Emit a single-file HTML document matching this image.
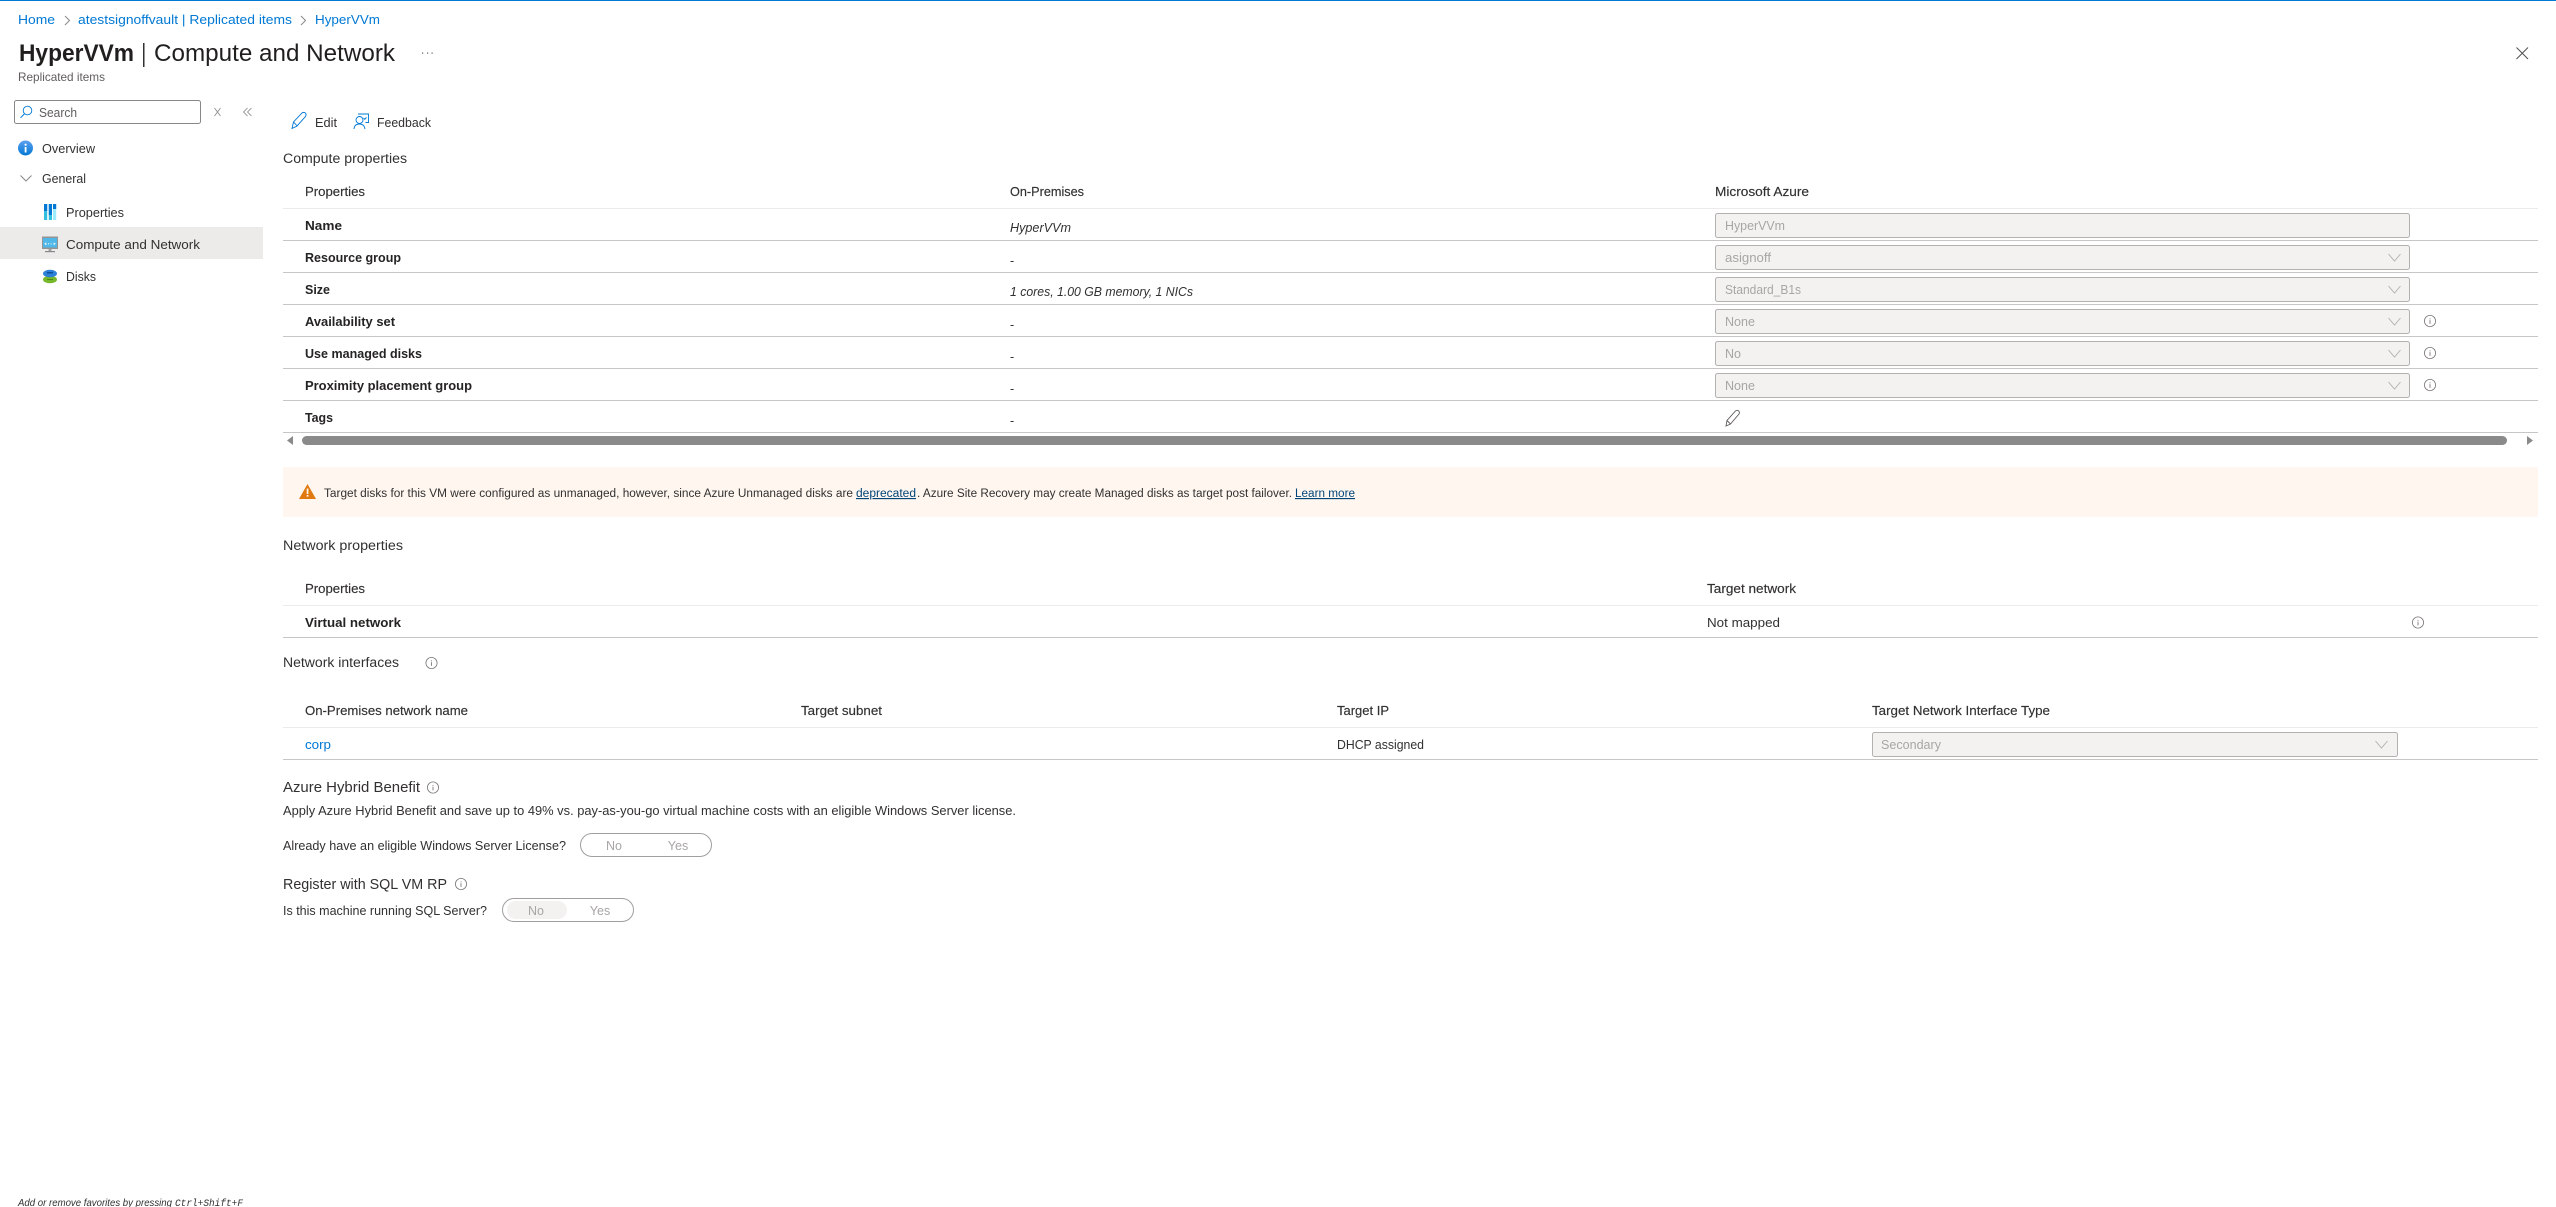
<!DOCTYPE html>
<html lang="en"><head><meta charset="utf-8"><title>HyperVVm | Compute and Network</title>
<style>
html,body{margin:0;padding:0;background:#fff;width:2556px;height:1207px;overflow:hidden}
svg{display:block}
text{font-family:"Liberation Sans",sans-serif;font-size:12.5px;fill:#323130;white-space:pre}
.l{fill:#0078d4}
.b{font-weight:700;fill:#252423}
.h{stroke:#323130;stroke-width:.15}
.g{fill:#a8a6a4}
.i{font-style:italic}
.ln{stroke:#c8c6c4;stroke-width:1}
.lt{stroke:#edebe9;stroke-width:1}
.in{fill:#f3f2f1;stroke:#b3b0ad;stroke-width:1}
.ch{fill:none;stroke:#b3b0ad;stroke-width:.9}
.inf{fill:none;stroke:#7a7876;stroke-width:.8}
.dk{fill:none;stroke:#8a8886;stroke-width:1}
</style></head><body>
<svg width="2556" height="1207" viewBox="0 0 2556 1207" xmlns="http://www.w3.org/2000/svg">
<defs>
<g id="info"><circle cx="0" cy="0" r="5.6" class="inf"/><rect x="-.45" y="-2.6" width=".9" height=".9" fill="#7a7876"/><rect x="-.45" y="-.8" width=".9" height="3.6" fill="#7a7876"/></g>
<linearGradient id="gb" x1="0" y1="0" x2="0" y2="1"><stop offset="0" stop-color="#5ea0ef"/><stop offset="1" stop-color="#0078d4"/></linearGradient>
</defs>
<rect x="0" y="0" width="2556" height="1" fill="#0078d4"/>

<!-- breadcrumb -->
<text x="18" y="24" class="l" textLength="37" lengthAdjust="spacingAndGlyphs">Home</text>
<path d="M65 16l4.500 4.500-4.500 4.500" class="dk"/>
<text x="78" y="24" class="l" textLength="214" lengthAdjust="spacingAndGlyphs">atestsignoffvault | Replicated items</text>
<path d="M301 16l4.500 4.500-4.500 4.500" class="dk"/>
<text x="315" y="24" class="l" textLength="65" lengthAdjust="spacingAndGlyphs">HyperVVm</text>

<!-- title -->
<text x="19" y="61" style="font-size:24px;font-weight:700;fill:#201f1e" textLength="115" lengthAdjust="spacingAndGlyphs">HyperVVm</text>
<rect x="143" y="43" width="1.500" height="24" fill="#323130"/>
<text x="154" y="61" style="font-size:24px;fill:#201f1e" textLength="241" lengthAdjust="spacingAndGlyphs">Compute and Network</text>
<text x="18" y="81" style="font-size:12px;fill:#605e5c" textLength="87" lengthAdjust="spacingAndGlyphs">Replicated items</text>
<g fill="#605e5c"><rect x="422" y="52.500" width="1.200" height="1.200"/><rect x="427" y="52.500" width="1.200" height="1.200"/><rect x="431.500" y="52.500" width="1.200" height="1.200"/></g>
<path d="M2516.500 47.500l11.500 11.500M2528 47.500l-11.500 11.500" fill="none" stroke="#505050" stroke-width="1"/>

<!-- search -->
<rect x="14.500" y="100.500" width="186" height="23" rx="2" fill="#fff" stroke="#8a8886"/>
<circle cx="27.500" cy="110.500" r="4.300" fill="none" stroke="#0078d4" stroke-width=".9"/>
<path d="M24.300 114l-3.800 3.800" fill="none" stroke="#0078d4" stroke-width="1"/>
<text x="39" y="117" style="fill:#605e5c" textLength="38" lengthAdjust="spacingAndGlyphs">Search</text>
<path d="M214.500 108l6 8M220.500 108l-6 8" fill="none" stroke="#8a8886" stroke-width=".8"/>
<path d="M247.500 108l-4 4 4 4M251.500 108l-4 4 4 4" fill="none" stroke="#a19f9d" stroke-width="1"/>

<!-- nav -->
<circle cx="25.500" cy="148" r="7.500" fill="url(#gb)"/>
<rect x="24.700" y="147" width="1.800" height="5.500" fill="#fff"/><circle cx="25.600" cy="144.700" r="1.100" fill="#fff"/>
<text x="42" y="153" textLength="53" lengthAdjust="spacingAndGlyphs">Overview</text>
<path d="M20.500 175.500l5.500 5.500 5.500-5.500" class="dk"/>
<text x="42" y="183" textLength="44" lengthAdjust="spacingAndGlyphs">General</text>
<rect x="44" y="204" width="3.200" height="16" fill="#32bedd"/><rect x="44" y="204" width="3.200" height="7" fill="#0078d4"/>
<rect x="48.800" y="204" width="3.200" height="16" fill="#32bedd"/><rect x="48.800" y="204" width="3.200" height="11" fill="#0078d4"/>
<rect x="53" y="204" width="3.200" height="16" fill="#9cebff"/><rect x="53" y="204" width="3.200" height="5" fill="#0078d4"/>
<text x="66" y="217" textLength="58" lengthAdjust="spacingAndGlyphs">Properties</text>
<rect x="0" y="227" width="263" height="32" fill="#edebe9"/>
<rect x="42" y="236.500" width="16" height="12.500" fill="#949494"/><rect x="43" y="238" width="14" height="9.500" fill="#50b8e8"/>
<rect x="48.500" y="249" width="3" height="2" fill="#a0a0a0"/><rect x="45" y="251" width="10" height="1.200" fill="#8a8a8a"/>
<path d="M46.500 242.800l-1.500 1 1.500 1M53.500 242.800l1.500 1-1.500 1" fill="none" stroke="#fff" stroke-width=".8"/><rect x="48" y="243.300" width="1" height="1" fill="#fff"/><rect x="50.500" y="243.300" width="1" height="1" fill="#fff"/>
<text x="66" y="249" textLength="134" lengthAdjust="spacingAndGlyphs">Compute and Network</text>
<ellipse cx="50" cy="279.500" rx="7" ry="3.800" fill="#76b82a"/><rect x="47" y="279" width="6" height="1" fill="#4f8a10"/>
<ellipse cx="50" cy="273.500" rx="7" ry="3.800" fill="#2f80d8"/><rect x="47" y="272" width="6" height="1.500" fill="#0a4f9a"/>
<text x="66" y="281" textLength="30" lengthAdjust="spacingAndGlyphs">Disks</text>

<!-- toolbar -->
<path d="M292 128.500l1.500-6.500 8.500-9q2-1.300 3.500.2 1.200 1.600-.2 3.500l-8.500 9.500zM293.500 122l3.300 3.500" fill="none" stroke="#0078d4" stroke-width=".9"/>
<text x="315" y="127" textLength="22" lengthAdjust="spacingAndGlyphs">Edit</text>
<circle cx="359.500" cy="120" r="3.500" fill="none" stroke="#0078d4" stroke-width=".9"/>
<path d="M354 129q.3-5 5.500-5 4.700 0 5.500 5M358 114h10.500v8.500h-3M363.500 118l1.300 1.300 1.700-2" fill="none" stroke="#0078d4" stroke-width=".9"/>
<text x="377" y="127" textLength="54" lengthAdjust="spacingAndGlyphs">Feedback</text>

<!-- compute table -->
<text x="283" y="163" style="font-size:13.5px" textLength="124" lengthAdjust="spacingAndGlyphs">Compute properties</text>
<line x1="283" x2="2538" y1="208.500" y2="208.500" class="lt"/>
<line x1="283" x2="2538" y1="240.500" y2="240.500" class="ln"/>
<line x1="283" x2="2538" y1="272.500" y2="272.500" class="ln"/>
<line x1="283" x2="2538" y1="304.500" y2="304.500" class="ln"/>
<line x1="283" x2="2538" y1="336.500" y2="336.500" class="ln"/>
<line x1="283" x2="2538" y1="368.500" y2="368.500" class="ln"/>
<line x1="283" x2="2538" y1="400.500" y2="400.500" class="ln"/>
<line x1="283" x2="2538" y1="432.500" y2="432.500" class="ln"/>
<text x="305" y="196" class="h" textLength="60" lengthAdjust="spacingAndGlyphs">Properties</text>
<text x="1010" y="196" class="h" textLength="74" lengthAdjust="spacingAndGlyphs">On-Premises</text>
<text x="1715" y="196" class="h" textLength="94" lengthAdjust="spacingAndGlyphs">Microsoft Azure</text>
<text x="305" y="230" class="b" textLength="37" lengthAdjust="spacingAndGlyphs">Name</text>
<text x="305" y="262" class="b" textLength="96" lengthAdjust="spacingAndGlyphs">Resource group</text>
<text x="305" y="294" class="b" textLength="25" lengthAdjust="spacingAndGlyphs">Size</text>
<text x="305" y="326" class="b" textLength="90" lengthAdjust="spacingAndGlyphs">Availability set</text>
<text x="305" y="358" class="b" textLength="117" lengthAdjust="spacingAndGlyphs">Use managed disks</text>
<text x="305" y="390" class="b" textLength="167" lengthAdjust="spacingAndGlyphs">Proximity placement group</text>
<text x="305" y="422" class="b" textLength="28" lengthAdjust="spacingAndGlyphs">Tags</text>
<text x="1010" y="232" class="i" textLength="61" lengthAdjust="spacingAndGlyphs">HyperVVm</text>
<text x="1010" y="265">-</text>
<text x="1010" y="296" class="i" textLength="183" lengthAdjust="spacingAndGlyphs">1 cores, 1.00 GB memory, 1 NICs</text>
<text x="1010" y="329">-</text>
<text x="1010" y="361">-</text>
<text x="1010" y="393">-</text>
<text x="1010" y="425">-</text>

<rect x="1715.500" y="213.500" width="694" height="24" rx="2" class="in"/>
<rect x="1715.500" y="245.500" width="694" height="24" rx="2" class="in"/>
<rect x="1715.500" y="277.500" width="694" height="24" rx="2" class="in"/>
<rect x="1715.500" y="309.500" width="694" height="24" rx="2" class="in"/>
<rect x="1715.500" y="341.500" width="694" height="24" rx="2" class="in"/>
<rect x="1715.500" y="373.500" width="694" height="24" rx="2" class="in"/>
<text x="1725" y="230" class="g" textLength="60" lengthAdjust="spacingAndGlyphs">HyperVVm</text>
<text x="1725" y="262" class="g" textLength="46" lengthAdjust="spacingAndGlyphs">asignoff</text>
<text x="1725" y="294" class="g" textLength="76" lengthAdjust="spacingAndGlyphs">Standard_B1s</text>
<text x="1725" y="326" class="g" textLength="30" lengthAdjust="spacingAndGlyphs">None</text>
<text x="1725" y="358" class="g" textLength="16" lengthAdjust="spacingAndGlyphs">No</text>
<text x="1725" y="390" class="g" textLength="30" lengthAdjust="spacingAndGlyphs">None</text>
<path d="M2388.500 254l6 7 6-7M2388.500 286l6 7 6-7M2388.500 318l6 7 6-7M2388.500 350l6 7 6-7M2388.500 382l6 7 6-7" class="ch"/>
<use href="#info" x="2430" y="321"/><use href="#info" x="2430" y="353"/><use href="#info" x="2430" y="385"/>
<path d="M1726 426l1-5.500 8.500-9.500q1.500-1.200 3-.2 1.600 1.400.5 3.200l-8.500 10zM1727 420.500l3.500 3.500" fill="none" stroke="#605e5c" stroke-width=".9"/>

<!-- scrollbar -->
<path d="M293 436v9l-6-4.500z" fill="#8a8a8a"/>
<rect x="302" y="436" width="2205" height="9" rx="4.500" fill="#8a8a8a"/>
<path d="M2527 436v9l6-4.500z" fill="#8a8a8a"/>

<!-- warning -->
<rect x="283" y="467" width="2255" height="50" rx="2" fill="#fff6f0"/>
<path d="M307.500 484l8.500 15h-17z" fill="#e07a10"/>
<rect x="306.700" y="488.500" width="1.700" height="5.500" fill="#fff6f0"/><rect x="306.700" y="495" width="1.700" height="1.700" fill="#fff6f0"/>
<text x="324" y="497" style="font-size:11.500px" textLength="529" lengthAdjust="spacingAndGlyphs">Target disks for this VM were configured as unmanaged, however, since Azure Unmanaged disks are</text>
<text x="856" y="497" style="font-size:11.500px;fill:#004578;text-decoration:underline" textLength="60" lengthAdjust="spacingAndGlyphs">deprecated</text>
<text x="917" y="497" style="font-size:11.500px" textLength="375" lengthAdjust="spacingAndGlyphs">. Azure Site Recovery may create Managed disks as target post failover.</text>
<text x="1295" y="497" style="font-size:11.500px;fill:#004578;text-decoration:underline" textLength="60" lengthAdjust="spacingAndGlyphs">Learn more</text>

<!-- network -->
<text x="283" y="550" style="font-size:13.500px" textLength="120" lengthAdjust="spacingAndGlyphs">Network properties</text>
<text x="305" y="593" class="h" textLength="60" lengthAdjust="spacingAndGlyphs">Properties</text>
<text x="1707" y="593" class="h" textLength="89" lengthAdjust="spacingAndGlyphs">Target network</text>
<line x1="283" x2="2538" y1="605.500" y2="605.500" class="lt"/>
<text x="305" y="627" class="b" textLength="96" lengthAdjust="spacingAndGlyphs">Virtual network</text>
<text x="1707" y="627" textLength="73" lengthAdjust="spacingAndGlyphs">Not mapped</text>
<use href="#info" x="2418" y="622.500"/>
<line x1="283" x2="2538" y1="637.500" y2="637.500" class="ln"/>
<text x="283" y="667" style="font-size:13.500px" textLength="116" lengthAdjust="spacingAndGlyphs">Network interfaces</text>
<use href="#info" x="431.500" y="663"/>
<text x="305" y="715" class="h" textLength="163" lengthAdjust="spacingAndGlyphs">On-Premises network name</text>
<text x="801" y="715" class="h" textLength="81" lengthAdjust="spacingAndGlyphs">Target subnet</text>
<text x="1337" y="715" class="h" textLength="52" lengthAdjust="spacingAndGlyphs">Target IP</text>
<text x="1872" y="715" class="h" textLength="178" lengthAdjust="spacingAndGlyphs">Target Network Interface Type</text>
<line x1="283" x2="2538" y1="727.500" y2="727.500" class="lt"/>
<text x="305" y="749" class="l" textLength="26" lengthAdjust="spacingAndGlyphs">corp</text>
<text x="1337" y="749" textLength="87" lengthAdjust="spacingAndGlyphs">DHCP assigned</text>
<rect x="1872.500" y="732.500" width="525" height="24" rx="2" class="in"/>
<text x="1881" y="749" class="g" textLength="60" lengthAdjust="spacingAndGlyphs">Secondary</text>
<path d="M2375.500 741l6 7 6-7" class="ch"/>
<line x1="283" x2="2538" y1="759.500" y2="759.500" class="ln"/>

<!-- hybrid benefit -->
<text x="283" y="792" style="font-size:14.500px" textLength="137" lengthAdjust="spacingAndGlyphs">Azure Hybrid Benefit</text>
<use href="#info" x="433" y="787.500"/>
<text x="283" y="815" textLength="733" lengthAdjust="spacingAndGlyphs">Apply Azure Hybrid Benefit and save up to 49% vs. pay-as-you-go virtual machine costs with an eligible Windows Server license.</text>
<text x="283" y="850" textLength="283" lengthAdjust="spacingAndGlyphs">Already have an eligible Windows Server License?</text>
<rect x="580.500" y="833.500" width="131" height="23" rx="11.500" fill="#fff" stroke="#a19f9d"/>
<text x="614" y="850" class="g" text-anchor="middle">No</text>
<text x="678" y="850" class="g" text-anchor="middle">Yes</text>
<text x="283" y="889" style="font-size:14.500px" textLength="164" lengthAdjust="spacingAndGlyphs">Register with SQL VM RP</text>
<use href="#info" x="461" y="884"/>
<text x="283" y="915" textLength="204" lengthAdjust="spacingAndGlyphs">Is this machine running SQL Server?</text>
<rect x="502.500" y="898.500" width="131" height="23" rx="11.500" fill="#fff" stroke="#a19f9d"/>
<rect x="507" y="901" width="60" height="18" rx="9" fill="#f3f2f1"/>
<text x="536" y="915" class="g" text-anchor="middle">No</text>
<text x="600" y="915" class="g" text-anchor="middle">Yes</text>

<!-- footer -->
<text x="18" y="1206" class="i" style="font-size:10.500px" textLength="154" lengthAdjust="spacingAndGlyphs">Add or remove favorites by pressing</text>
<text x="175" y="1206" class="i" style="font-size:10.500px;font-family:'Liberation Mono',monospace" textLength="68" lengthAdjust="spacingAndGlyphs">Ctrl+Shift+F</text>
</svg>
</body></html>
